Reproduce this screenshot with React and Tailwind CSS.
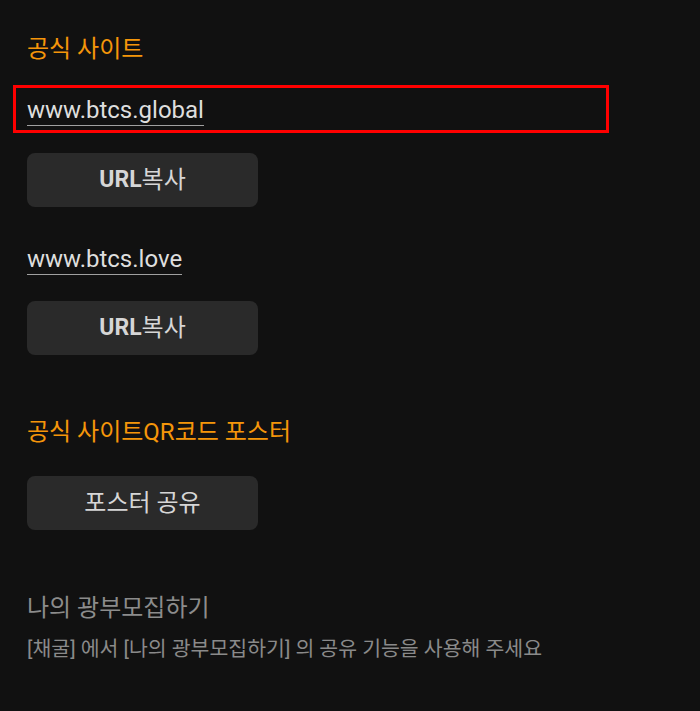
import React from "react";

const font = { fontFamily: 'Roboto, "Noto Sans CJK KR", sans-serif' };

function CopyButton({ children }) {
    return (
        <button className="w-[231px] h-[54px] rounded-[8px] bg-[#2a2a2a] text-[#d6d6d6] text-[24px] flex items-center justify-center">
            {children}
        </button>
    );
}

function UrlText({ children }) {
    return (
        <span className="inline-block text-[24px] leading-[29px] text-[#dedede] border-b border-[#a0a0a0]">
            {children}
        </span>
    );
}

export default function App() {
    return (
        <div className="min-h-screen bg-[#111111] pl-[27px] pt-[33px] flex flex-col items-start" style={font}>
            <h2 className="h-[32px] leading-[32px] text-[24px] text-[#f5960a]">공식 사이트</h2>

            <div className="mt-[20px] -ml-[14px] w-[596px] h-[48px] border-[3px] border-[#ff0000] pl-[11px] pt-[8px]">
                <UrlText>www.btcs.global</UrlText>
            </div>

            <div className="mt-[20px]">
                <CopyButton><span className="font-bold text-[23px]">URL</span><span>복사</span></CopyButton>
            </div>

            <div className="mt-[38px]">
                <UrlText>www.btcs.love</UrlText>
            </div>

            <div className="mt-[26px]">
                <CopyButton><span className="font-bold text-[23px]">URL</span><span>복사</span></CopyButton>
            </div>

            <h2 className="mt-[61px] h-[32px] leading-[32px] text-[24px] text-[#f5960a]">공식 사이트QR코드 포스터</h2>

            <div className="mt-[28px]">
                <CopyButton>포스터 공유</CopyButton>
            </div>

            <p className="mt-[62px] h-[32px] leading-[32px] text-[24px] text-[#8c8c8c]">나의 광부모집하기</p>
            <p className="mt-[11px] h-[28px] leading-[28px] text-[20.5px] text-[#8a8a8a]">
                [채굴] 에서 [나의 광부모집하기] 의 공유 기능을 사용해 주세요
            </p>
        </div>
    );
}
